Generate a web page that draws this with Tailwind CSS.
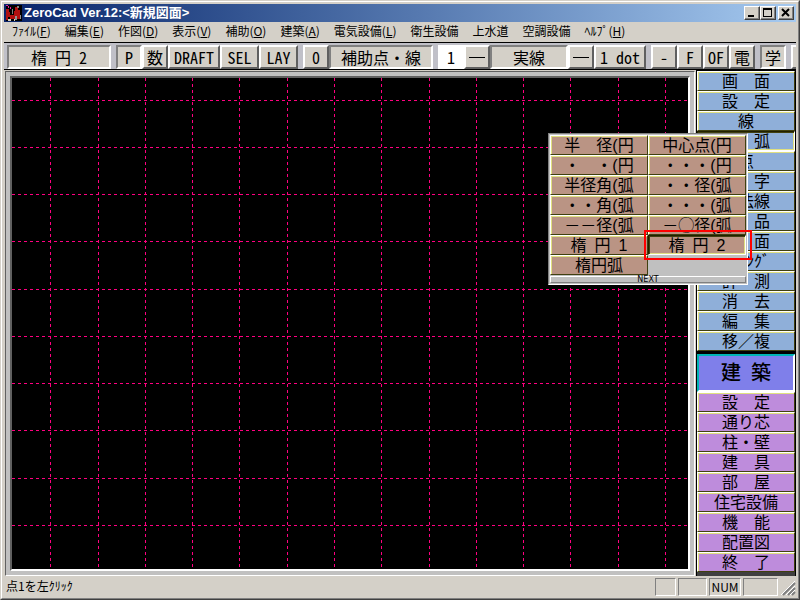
<!DOCTYPE html>
<html lang="ja">
<head>
  <meta charset="UTF-8">
  <meta name="viewport" content="width=device-width, initial-scale=1.0">
  <title>ZeroCad Ver.12</title>
  <script src="https://cdn.jsdelivr.net/npm/@tailwindcss/browser@4"></script>
</head>
<body class="bg-[#d4d0c8] text-black font-['Noto_Sans_CJK_JP',sans-serif]">
  <div class="min-h-screen flex flex-col border border-t-[#d4d0c8] border-l-[#d4d0c8] border-r-[#404040] border-b-[#404040]">
  <div class="flex-1 flex flex-col border border-t-white border-l-white border-r-[#808080] border-b-[#808080] p-0.5">

    <!-- Title bar -->
    <header class="h-[18px] flex items-center gap-0.5 px-0.5 bg-linear-to-r from-[#0a246a] to-[#a6caf0]">
      <svg class="w-4 h-4" viewBox="0 0 16 16" shape-rendering="crispEdges">
        <rect width="16" height="16" fill="#000"/>
        <path d="M0 4h3v3h1v5H2v3H0zM9 2h3v3h2v9h-3v-3H8V6h1zM4 10h5v4H4z" fill="#b01010"/>
        <path d="M6 4h1v5H6zM11 1h2v2h-2z" fill="#808080"/>
        <path d="M9 11h2v4H9zM14 10h1v4h-1z" fill="#909090"/>
        <path d="M0 0h2v1H0zM2 1h1v2H2zM4 2h1v2H4z" fill="#e020a0"/>
        <path d="M2 14h3v2H2zM8 14h1v2H8z" fill="#d8d0c0"/>
      </svg>
      <h1 class="flex-1 text-[13px] leading-4 font-bold text-white font-['Liberation_Sans','Noto_Sans_CJK_JP',sans-serif]">ZeroCad Ver.12:&lt;新規図面&gt;</h1>
      <div class="flex">
        <button aria-label="最小化" class="w-4 h-3.5 flex items-center justify-center bg-[#d4d0c8] border border-t-white border-l-white border-r-[#404040] border-b-[#404040] shadow-[inset_-1px_-1px_#808080]">
          <svg class="w-3 h-3" viewBox="0 0 12 12"><path d="M2 8h6v2H2z"/></svg>
        </button>
        <button aria-label="最大化" class="w-4 h-3.5 flex items-center justify-center bg-[#d4d0c8] border border-t-white border-l-white border-r-[#404040] border-b-[#404040] shadow-[inset_-1px_-1px_#808080]">
          <svg class="w-3 h-3" viewBox="0 0 12 12"><path fill-rule="evenodd" d="M1 1h9v9H1zM2 3v6h7V3z"/></svg>
        </button>
        <button aria-label="閉じる" class="ml-0.5 w-4 h-3.5 flex items-center justify-center bg-[#d4d0c8] border border-t-white border-l-white border-r-[#404040] border-b-[#404040] shadow-[inset_-1px_-1px_#808080]">
          <svg class="w-3 h-3" viewBox="0 0 12 12"><path d="M2 2l7 7M9 2l-7 7" stroke="#000" stroke-width="2"/></svg>
        </button>
      </div>
    </header>

    <!-- Menu -->
    <nav class="h-5 pb-0.5 flex items-center gap-3.5 pl-2 text-xs leading-4 whitespace-nowrap">
      <button>ﾌｧｲﾙ(<u>F</u>)</button>
      <button>編集(<u>E</u>)</button>
      <button>作図(<u>D</u>)</button>
      <button>表示(<u>V</u>)</button>
      <button>補助(<u>O</u>)</button>
      <button>建築(<u>A</u>)</button>
      <button>電気設備(<u>L</u>)</button>
      <button>衛生設備</button>
      <button>上水道</button>
      <button>空調設備</button>
      <button>ﾍﾙﾌﾟ(<u>H</u>)</button>
    </nav>

    <!-- Tool bar -->
    <div class="h-7 flex items-stretch pl-[3px] pt-0.5 overflow-hidden bg-[#c0c0c8] border-t border-b border-black text-base leading-4 whitespace-nowrap [font-feature-settings:'hwid']
      [&>button]:shrink-0 [&>button]:bg-[#d4d0c8] [&>button]:border-2 [&>button]:border-t-white [&>button]:border-l-white [&>button]:border-r-[#606060] [&>button]:border-b-[#606060]
      [&>button[aria-pressed=true]]:border-t-[#808080] [&>button[aria-pressed=true]]:border-l-[#808080] [&>button[aria-pressed=true]]:border-r-white [&>button[aria-pressed=true]]:border-b-white">
      <button aria-pressed="true" class="w-[104px] mr-[5px]">楕 円 2</button>
      <button aria-pressed="true" class="w-[26px]">P</button>
      <button class="w-[26px]">数</button>
      <button class="w-[52px]">DRAFT</button>
      <button class="w-[39px]">SEL</button>
      <button class="w-[39px] mr-[5px]">LAY</button>
      <button class="w-[26px]">0</button>
      <button aria-pressed="true" class="w-[104px] mr-[5px]">補助点・線</button>
      <input aria-label="ペン" value="1" class="w-[26px] shrink-0 bg-white text-center outline-none">
      <button aria-label="線種" class="w-[26px] flex items-center justify-center"><span class="w-4 h-px bg-black"></span></button>
      <button aria-pressed="true" class="w-[78px]">実線</button>
      <button aria-label="線の太さ" class="w-[26px] flex items-center justify-center"><span class="w-4 h-px bg-black"></span></button>
      <button class="w-[52px] mr-[5px]">1 dot</button>
      <button class="w-[26px]">-</button>
      <button class="w-[26px]">F</button>
      <button class="w-[26px]">OF</button>
      <button class="w-[26px] mr-[5px]">電</button>
      <button aria-pressed="true" class="w-[26px] mr-[5px]">学</button>
      <button aria-label="次" class="w-[26px]"></button>
    </div>

    <main class="relative flex-1 flex">
      <!-- Drawing area -->
      <div class="flex-1 min-w-0 flex bg-[#c0c0c0] mt-px mx-px border border-t-[#606060] border-l-[#606060] border-r-white border-b-white">
        <div class="flex-1 min-w-0 flex m-1 border-2 border-t-[#606060] border-l-[#606060] border-r-white border-b-white bg-black">
          <svg id="grid" class="flex-1 min-w-0" shape-rendering="crispEdges" stroke="#ff0080" stroke-dasharray="3 3"></svg>
        </div>
      </div>

      <!-- Side commands -->
      <aside class="w-[100px] shrink-0 flex flex-col bg-black pt-px px-px text-base leading-4 font-['Liberation_Sans','Noto_Sans_CJK_JP',sans-serif]
        [&_button]:block [&_button]:w-full [&_button]:h-5 [&_button]:pt-0.5 [&_button]:border [&_button]:border-t-white [&_button]:border-l-white [&_button]:border-r-[#404010] [&_button]:border-b-[#404010] [&_button]:shadow-[inset_1px_1px_#e0e080]
        [&_button[aria-pressed=true]]:border-t-[#202000] [&_button[aria-pressed=true]]:border-l-[#202000] [&_button[aria-pressed=true]]:border-r-white [&_button[aria-pressed=true]]:border-b-white [&_button[aria-pressed=true]]:shadow-[inset_1px_1px_#404010,inset_-1px_-1px_#e0e080]">
        <div class="[&>button]:bg-[#8fafd9]">
          <button>画　面</button>
          <button>設　定</button>
          <button>線</button>
          <button aria-pressed="true">円　弧</button>
          <button>点</button>
          <button>文　字</button>
          <button>寸法線</button>
          <button>部　品</button>
          <button>図　面</button>
          <button>ﾊｯﾁﾝｸﾞ</button>
          <button>計　測</button>
          <button>消　去</button>
          <button>編　集</button>
          <button>移／複</button>
        </div>
        <h2 class="h-[38px] mt-[3px] flex items-center justify-center bg-[#7f7fea] border-2 border-t-[#00b4b4] border-l-[#00b4b4] border-r-white border-b-white text-xl font-medium">建&ensp;築</h2>
        <div class="[&>button]:bg-[#be8cdc]">
          <button>設　定</button>
          <button>通り芯</button>
          <button>柱・壁</button>
          <button>建　具</button>
          <button>部　屋</button>
          <button>住宅設備</button>
          <button>機　能</button>
          <button>配置図</button>
          <button>終　了</button>
        </div>
        <div class="h-1 bg-[#404040]"></div>
      </aside>

      <!-- Arc palette, floats over drawing area and side commands -->
      <div class="absolute right-12 top-[63px] w-[200px] p-px bg-[#c0c0c0] border border-t-[#808080] border-l-[#808080] border-r-white border-b-white text-base leading-4 font-['Liberation_Sans','Noto_Sans_CJK_JP',sans-serif]">
        <div class="grid grid-cols-2
          [&>button]:h-5 [&>button]:pt-0.5 [&>button]:bg-[#ba9484] [&>button]:border [&>button]:border-t-white [&>button]:border-l-white [&>button]:border-r-[#404010] [&>button]:border-b-[#404010] [&>button]:shadow-[inset_1px_1px_#e0e080]
          [&>button[aria-pressed=true]]:border-t-[#202000] [&>button[aria-pressed=true]]:border-l-[#202000] [&>button[aria-pressed=true]]:border-r-white [&>button[aria-pressed=true]]:border-b-white [&>button[aria-pressed=true]]:shadow-[inset_1px_1px_#404010,inset_-1px_-1px_#e0e080]">
          <button>半　径(円</button>
          <button>中心点(円</button>
          <button>・　・(円</button>
          <button>・・・(円</button>
          <button>半径角(弧</button>
          <button>・・径(弧</button>
          <button>・・角(弧</button>
          <button>・・・(弧</button>
          <button>－－径(弧</button>
          <button>－◯径(弧</button>
          <button>楕&ensp;円&ensp;1</button>
          <button aria-pressed="true">楕&ensp;円&ensp;2</button>
          <button>楕円弧</button>
        </div>
        <button class="block w-full h-[7px] mt-px border border-t-white border-l-white border-r-[#808080] border-b-[#808080] text-[8px] leading-[5px] font-['DejaVu_Sans',sans-serif]">NEXT</button>
      </div>
      <div class="absolute right-[44px] top-[160px] w-[108px] h-[30px] border-2 border-[#ff0000]"></div>
    </main>

    <!-- Status bar -->
    <footer class="h-5 flex items-stretch gap-0.5 pt-0.5 text-xs leading-4">
      <p class="flex-1 pl-0.5">点1を左ｸﾘｯｸ</p>
      <span class="w-[21px] border border-t-[#808080] border-l-[#808080] border-r-white border-b-white"></span>
      <span class="w-[29px] border border-t-[#808080] border-l-[#808080] border-r-white border-b-white"></span>
      <span class="w-8 text-center border border-t-[#808080] border-l-[#808080] border-r-white border-b-white">NUM</span>
      <span class="w-[35px] border border-t-[#808080] border-l-[#808080] border-r-white border-b-white"></span>
      <svg class="w-4 h-4 mt-0.5" viewBox="0 0 16 16">
        <path d="M3 15L15 3M8 15l7-7M12 15l3-3" stroke="#808080" stroke-width="2"/>
        <path d="M1 15L15 1M6 15l9-9M10 15l5-5" stroke="#fff"/>
      </svg>
    </footer>
  </div>
  </div>

  <script>
    const grid = document.getElementById("grid");
    const pitch = 47.28;

    function addLine(x1, y1, x2, y2) {
      const line = document.createElementNS("http://www.w3.org/2000/svg", "line");
      line.setAttribute("x1", x1);
      line.setAttribute("y1", y1);
      line.setAttribute("x2", x2);
      line.setAttribute("y2", y2);
      grid.appendChild(line);
    }

    function drawGrid() {
      grid.replaceChildren();
      const { width, height } = grid.getBoundingClientRect();
      for (let x = 38.3; x < width; x += pitch) {
        addLine(Math.round(x) + 0.5, 0, Math.round(x) + 0.5, height);
      }
      for (let y = 21.5; y < height; y += pitch) {
        addLine(0, Math.round(y) + 0.5, width, Math.round(y) + 0.5);
      }
    }

    new ResizeObserver(drawGrid).observe(grid.parentElement);
  </script>
</body>
</html>
